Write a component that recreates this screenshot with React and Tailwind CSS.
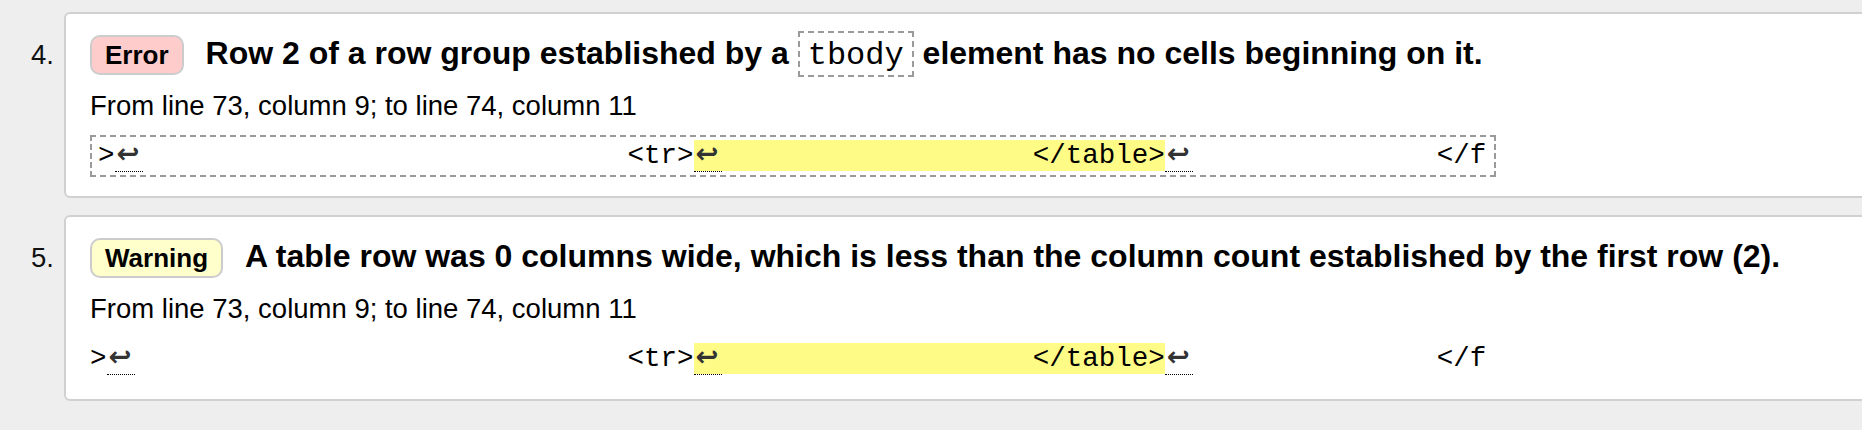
import React from 'react';

const sans = "font-['Liberation_Sans',Arial,sans-serif]";
const mono = "font-['Liberation_Mono','DejaVu_Sans',monospace]";

// newline marker, the dotted line sits under it like an abbr
function Ret() {
  return <span className="border-b border-dotted border-black pl-[2px] pr-[3px] font-bold text-[#333]">↩</span>;
}

function Gap({ w }) {
  // w is a full class name, e.g. "w-[483px]"
  return <span className={`inline-block ${w}`} />;
}

function Badge({ kind }) {
  const bg = kind === 'Error' ? 'bg-[#ffcccc]' : 'bg-[#ffffcc]';
  return (
    <span className={`shrink-0 rounded-[10px] border-2 border-[#cccccc] ${bg} px-[13px] text-[26px] font-bold leading-[36px]`}>
      {kind}
    </span>
  );
}

function Extract({ boxed }) {
  return (
    <div className="mt-[11px]">
      <code
        className={`inline-block whitespace-pre text-[27.5px] leading-[32px] text-black ${mono} ${
          boxed ? 'border-2 border-dashed border-[#9a9a9a] py-[3px] pl-[6px] pr-[8px]' : 'py-[5px]'
        }`}
      >
        &gt;<Ret />
        <Gap w={boxed ? 'w-[485px]' : 'w-[493px]'} />
        &lt;tr&gt;
        <mark className="bg-[#fffb87] text-black">
          <Ret />
          <Gap w="w-[311px]" />
          &lt;/table&gt;
        </mark>
        <Ret />
        <Gap w="w-[244px]" />
        &lt;/f
      </code>
    </div>
  );
}

function Message({ n, kind, children, boxed }) {
  return (
    <li className="flex items-baseline">
      <span className="w-[64px] shrink-0 pr-[10px] text-right text-[27.5px] text-[#111]">{n}.</span>
      <div className="mr-[-12px] flex-1 rounded-[6px] border-2 border-[#d0d0d0] bg-white pb-[19px] pl-[24px] pt-[14px]">
        <div className="flex items-baseline">
          <Badge kind={kind} />
          <span className="ml-[22px] whitespace-nowrap text-[32px] font-bold leading-[50px]">{children}</span>
        </div>
        <p className="mt-[10px] text-[27.5px] leading-[36px]">From line 73, column 9; to line 74, column 11</p>
        <Extract boxed={boxed} />
      </div>
    </li>
  );
}

export default function App() {
  return (
    <div className={`h-[430px] overflow-hidden bg-[#eeeeee] pt-[12px] text-black ${sans}`}>
      <ol className="space-y-[17px]">
        <Message n={4} kind="Error" boxed>
          Row 2 of a row group established by a
          {' '}
          <code
            className={`inline-block border-2 border-dashed border-[#9a9a9a] px-[8px] pb-[2px] pt-[5px] text-[32px] font-normal leading-[35px] ${mono}`}
          >
            tbody
          </code>
          {' '}
          element has no cells beginning on it.
        </Message>
        <Message n={5} kind="Warning">
          A table row was 0 columns wide, which is less than the column count established by the first row (2).
        </Message>
      </ol>
    </div>
  );
}
